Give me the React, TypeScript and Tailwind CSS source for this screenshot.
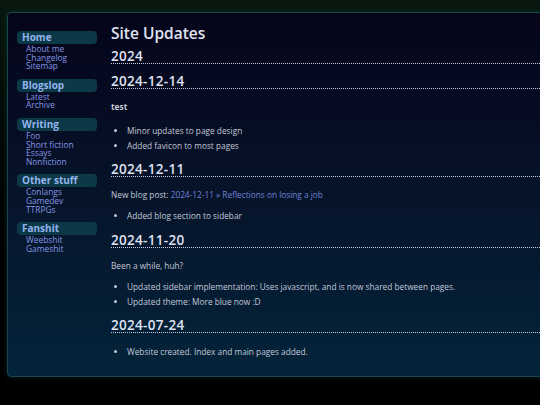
import React from 'react';

const font = { fontFamily: '"Open Sans", "Noto Sans", sans-serif' };

const navGroups = [
  { title: 'Home', links: ['About me', 'Changelog', 'Sitemap'] },
  { title: 'Blogslop', links: ['Latest', 'Archive'] },
  { title: 'Writing', links: ['Foo', 'Short fiction', 'Essays', 'Nonfiction'] },
  { title: 'Other stuff', links: ['Conlangs', 'Gamedev', 'TTRPGs'] },
  { title: 'Fanshit', links: ['Weebshit', 'Gameshit'] },
];

const Sidebar: React.FC = () => (
  <nav className="w-[80px] shrink-0 mt-[18px] flex flex-col gap-[8px]">
    {navGroups.map((g) => (
      <div key={g.title}>
        <div className="h-[13px] rounded-[4px] bg-[#0c3947] px-[5px] text-[10px] leading-[13px] font-bold text-[#93b3ef]">
          {g.title}
        </div>
        <ul className="pl-[9px] pt-[1px]">
          {g.links.map((l) => (
            <li key={l} className="text-[8.4px] leading-[8.6px] text-[#8595e4]">
              {l}
            </li>
          ))}
        </ul>
      </div>
    ))}
  </nav>
);

const H2: React.FC<{ children: React.ReactNode; className?: string }> = ({ children, className }) => (
  <h2
    className={`pt-[2px] text-[13.5px] leading-[14px] tracking-[0.3px] font-semibold text-[#dfe2f2] border-b border-dotted border-[#c8cce6] ${className ?? ''}`}
  >
    {children}
  </h2>
);

const body = 'text-[8.3px] leading-[15px] text-[#c3c8d8]';

export default function App() {
  return (
    <div
      className="w-[540px] h-[405px] overflow-hidden bg-gradient-to-b from-[#08180f] to-[#000000] pt-[12px] pl-[7px]"
      style={font}
    >
      <div className="w-[560px] h-[365px] rounded-[4px] border border-[#1a4650] bg-gradient-to-b from-[#05051a] to-[#03243a] flex pl-[9px] gap-[14px] shadow-[0_0_6px_rgba(20,90,90,0.35)]">
        <Sidebar />
        <main className="flex-1 pt-[10px]">
          <h1 className="text-[15.5px] leading-[20px] font-semibold text-[#e0e3f0]">Site Updates</h1>
          <H2 className="mt-[4px]">2024</H2>
          <H2 className="mt-[8px]">2024-12-14</H2>

          <p className={`mt-[10px] font-bold ${body}`}>test</p>
          <ul className={`mt-[9px] pl-[16px] list-disc ${body}`}>
            <li>Minor updates to page design</li>
            <li>Added favicon to most pages</li>
          </ul>

          <H2 className="mt-[7px]">2024-12-11</H2>
          <p className={`mt-[10px] ${body}`}>
            New blog post: <a className="text-[#7183d8]">2024-12-11 » Reflections on losing a job</a>
          </p>
          <ul className={`mt-[6px] pl-[16px] list-disc ${body}`}>
            <li>Added blog section to sidebar</li>
          </ul>

          <H2 className="mt-[8px]">2024-11-20</H2>
          <p className={`mt-[10px] ${body}`}>Been a while, huh?</p>
          <ul className={`mt-[6px] pl-[16px] list-disc ${body}`}>
            <li>Updated sidebar implementation: Uses javascript, and is now shared between pages.</li>
            <li>Updated theme: More blue now :D</li>
          </ul>

          <H2 className="mt-[7px]">2024-07-24</H2>
          <ul className={`mt-[11px] pl-[16px] list-disc ${body}`}>
            <li>Website created. Index and main pages added.</li>
          </ul>
        </main>
      </div>
    </div>
  );
}
